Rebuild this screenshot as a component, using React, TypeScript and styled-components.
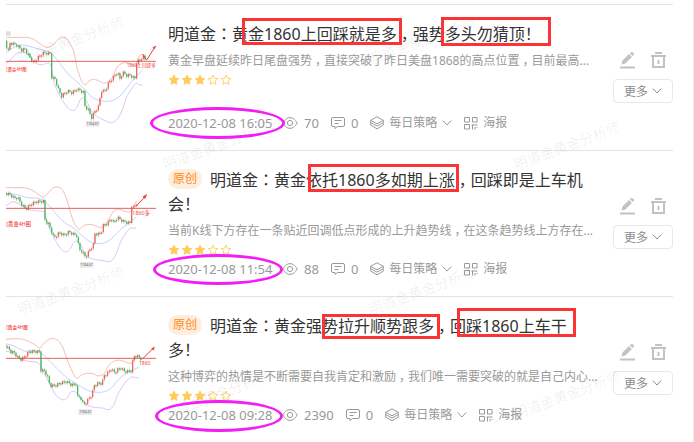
import React from "react";
import styled, { createGlobalStyle } from "styled-components";

const GlobalStyle = createGlobalStyle`
  * { box-sizing: border-box; }
  body {
    margin: 0;
    background: #fff;
    font-family: "Noto Sans", "Noto Sans CJK SC", sans-serif;
  }
`;

const Page = styled.main`
  position: relative;
  padding: 4px 20px 0 6px;
  border-right: 1px solid #ebebeb;
  overflow: hidden;
`;

const Post = styled.article`
  display: grid;
  grid-template-columns: 150px minmax(0, 1fr) 60px;
  min-height: 146px;
  border-top: 1px solid #e4e4e4;
`;

const Thumb = styled.svg`
  display: block;
  width: 150px;
  height: 112px;
  margin-top: 15px;
`;

const Content = styled.div`
  display: flex;
  flex-direction: column;
  padding: 16px 0 17px;
  margin: 0 15px 0 12px;
`;

const Title = styled.h2`
  margin: 0;
  font-size: 16px;
  font-weight: 400;
  line-height: 24px;
  color: #333;
`;

const Colon = styled.span`
  font-family: "Noto Sans CJK JP", sans-serif;
`;

const Comma = styled.span`
  display: inline-block;
  width: 1em;
  text-align: center;
  font-feature-settings: "halt";
`;

const Tag = styled.span`
  display: inline-block;
  margin: 2px 8px 0 0;
  padding: 0 5px;
  border-radius: 10px;
  background: #ffeedd;
  color: #ff8a14;
  font-size: 12px;
  line-height: 20px;
  vertical-align: top;
`;

const Summary = styled.p`
  margin: 5px 0 3px;
  font-size: 12px;
  line-height: 20px;
  color: #999;
  white-space: nowrap;
`;

const Stars = styled.div`
  display: flex;
  gap: 1px;
  height: 12px;
`;

const Meta = styled.div`
  display: flex;
  align-items: center;
  gap: 12px;
  height: 20px;
  margin-top: auto;
  font-size: 13px;
  line-height: 20px;
  color: #999;
  white-space: nowrap;
`;

const MetaItem = styled.span`
  display: flex;
  align-items: center;
  gap: 6px;
`;

const MetaButton = styled.button`
  display: flex;
  align-items: center;
  gap: 5px;
  padding: 0;
  border: 0;
  background: none;
  font: inherit;
  font-size: 12px;
  line-height: 20px;
  color: inherit;
`;

const DateText = styled.time`
  width: 102px;
`;

const Actions = styled.div`
  display: flex;
  flex-direction: column;
  align-items: flex-end;
  gap: 10px;
  padding-top: 46px;
`;

const IconRow = styled.div`
  display: flex;
  gap: 16px;
  padding-right: 7px;
`;

const IconButton = styled.button`
  display: block;
  width: 15px;
  height: 18px;
  padding: 0;
  border: 0;
  background: none;
  color: #c2c2c2;
  svg { display: block; }
`;

const MoreButton = styled.button`
  display: flex;
  align-items: center;
  justify-content: center;
  gap: 4px;
  width: 60px;
  height: 24px;
  padding: 0;
  border: 1px solid #e8e8e8;
  border-radius: 4px;
  background: #fff;
  color: #8c8c8c;
  font: inherit;
  font-size: 12px;
`;

const Overlay = styled.div`
  position: absolute;
  inset: 0;
  pointer-events: none;
`;

type Area = { x: number; y: number; w: number; h: number };

const Frame = styled.div<{ $a: Area }>`
  position: absolute;
  left: ${(p) => p.$a.x}px;
  top: ${(p) => p.$a.y}px;
  width: ${(p) => p.$a.w}px;
  height: ${(p) => p.$a.h}px;
  border: 3px solid #fb3335;
`;

const Ring = styled(Frame)`
  border-color: #f51df5;
  border-radius: 50%;
`;

const Watermark = styled.span<{ $x: number; $y: number }>`
  position: absolute;
  left: ${(p) => p.$x}px;
  top: ${(p) => p.$y}px;
  width: 120px;
  height: 20px;
  font-size: 14px;
  line-height: 20px;
  text-align: center;
  white-space: nowrap;
  color: rgba(0, 0, 0, 0.07);
  transform: rotate(-20deg);
`;

type Pt = [number, number];

type Chart = {
  top: number;
  level: number;
  price: Pt[];
  upper: string;
  middle: string;
  lower: string;
  arrow: string;
  head: string;
  note: { x: number; y: number; size: number; text: string };
  mark: { x: number; y: number; size: number; text: string };
  low: Pt;
  corner?: boolean;
};

const charts: Chart[] = [
  {
    top: 60,
    level: 184,
    price: [[20, 122], [25, 168], [30, 128], [52, 134], [66, 150], [76, 146], [88, 166], [102, 186], [116, 172], [130, 158], [152, 160], [157, 230], [168, 238], [178, 270], [186, 288], [204, 272], [218, 278], [232, 266], [252, 276], [257, 318], [268, 330], [276, 354], [286, 334], [298, 318], [306, 270], [316, 274], [330, 244], [342, 232], [354, 214], [362, 236], [370, 216], [382, 226], [390, 224], [408, 236], [413, 176], [420, 186], [430, 166], [438, 180]],
    upper: "M18 112H74C100 112 108 124 124 134C144 148 150 142 162 132C178 110 190 104 204 120C226 150 224 176 232 208C244 242 248 258 258 254C274 228 292 240 312 250C334 246 342 222 350 202C368 184 384 184 398 196C416 202 406 170 428 162",
    middle: "M18 158C46 136 62 130 92 140C118 150 138 148 154 160C178 184 190 208 210 228C242 252 254 272 282 296C312 308 342 310 366 282C390 250 408 228 428 210",
    lower: "M18 190C34 182 42 160 60 156C88 150 98 192 120 194C140 198 154 166 158 230C164 262 178 286 188 302C206 332 224 346 236 310C246 280 258 294 270 326C290 356 306 356 328 368C362 370 368 318 382 286C398 262 406 250 410 248C416 258 422 252 428 256",
    arrow: "M428 162L440 180L467 138",
    head: "M467 138l-9 5 5 4z",
    note: { x: 19, y: 213, size: 13, text: "[黄金4H图" },
    mark: { x: 380, y: 201, size: 14, text: "1860上回踩多" },
    low: [278, 371],
    corner: true,
  },
  {
    top: 63,
    level: 190,
    price: [[20, 144], [32, 148], [46, 160], [54, 154], [64, 174], [80, 192], [90, 180], [108, 170], [132, 168], [137, 224], [147, 236], [154, 252], [164, 278], [180, 262], [194, 270], [208, 260], [234, 272], [239, 314], [248, 318], [258, 336], [270, 316], [282, 298], [287, 266], [304, 266], [312, 240], [326, 234], [336, 218], [344, 234], [354, 216], [370, 228], [392, 234], [396, 180], [404, 188], [410, 174]],
    upper: "M18 128H72C96 130 110 146 130 158C146 148 152 126 170 126C190 124 198 156 208 188C218 232 228 246 238 254C254 232 276 236 300 248C324 248 326 206 350 192C372 192 382 210 396 196C404 184 406 170 412 166",
    middle: "M18 150C46 144 58 150 80 158C102 160 118 156 136 170C164 198 174 220 202 238C234 254 250 282 278 294C316 302 330 286 350 266C372 240 390 234 408 216",
    lower: "M18 182C28 178 30 170 40 170C62 174 78 196 100 196C132 202 134 188 140 230C154 264 164 282 174 300C194 332 208 324 218 296C234 276 240 296 256 326C274 350 298 342 322 350C346 354 352 310 364 286C378 262 386 252 392 248C400 252 404 248 408 250",
    arrow: "M408 184L438 152",
    head: "M441 148l-13 7 7 6z",
    note: { x: 19, y: 242, size: 16, text: "[黄金4H图" },
    mark: { x: 397, y: 209, size: 16, text: "1860多" },
    low: [260, 359],
  },
  {
    top: 66,
    level: 205,
    price: [[18, 166], [28, 176], [34, 184], [46, 188], [54, 200], [66, 208], [78, 196], [90, 184], [120, 184], [125, 240], [136, 242], [144, 258], [152, 286], [168, 286], [182, 278], [202, 274], [216, 284], [230, 282], [234, 320], [244, 322], [252, 344], [262, 334], [278, 312], [284, 286], [298, 278], [308, 280], [314, 256], [328, 246], [334, 234], [346, 248], [354, 238], [366, 232], [374, 244], [396, 242], [402, 200], [412, 196], [424, 206]],
    upper: "M18 148C42 146 70 142 92 158C112 164 116 178 122 174C136 150 154 142 164 146C188 154 194 190 204 216C220 252 224 262 232 266C248 248 264 248 282 252C302 266 316 252 322 232C338 208 358 206 376 216C392 224 398 220 404 204L412 198",
    middle: "M18 162C46 164 56 180 78 184C108 178 120 184 140 204C168 232 192 260 214 272C240 286 260 306 284 306C314 310 330 302 348 278C370 250 390 244 416 232",
    lower: "M18 184C38 184 50 204 76 212C100 218 116 208 126 236C142 268 152 286 166 314C190 340 202 330 210 308C224 294 236 316 254 336C270 356 290 352 308 354C340 372 344 334 354 312C370 282 382 268 396 260C404 264 410 262 416 264",
    arrow: "M428 206L462 173",
    head: "M464 171l-10 5 6 5z",
    note: { x: 19, y: 117, size: 14, text: "[黄金4H图" },
    mark: { x: 417, y: 226, size: 15, text: "1860" },
    low: [256, 366],
  },
];

function priceAt(points: Pt[], x: number) {
  for (let i = 1; i < points.length; i++) {
    const [x1, y1] = points[i];
    const [x0, y0] = points[i - 1];
    if (x <= x1) return y0 + ((y1 - y0) * (x - x0)) / (x1 - x0);
  }
  return points[points.length - 1][1];
}

function Candles({ points }: { points: Pt[] }) {
  const out: React.ReactNode[] = [];
  const end = points[points.length - 1][0];
  let open = points[0][1];
  for (let x = points[0][0], i = 0; x <= end; x += 5, i++) {
    const close = priceAt(points, x + 2) + (i % 3 === 0 ? 5 : i % 3 === 1 ? -3 : 0);
    const color = close > open ? "#4cb866" : "#e8695f";
    const top = Math.min(open, close);
    const size = Math.max(4, Math.abs(close - open));
    out.push(
      <g key={x} fill={color}>
        <rect x={x - 2} y={top} width={4} height={size} />
        <rect x={x - 1} y={top - 4} width={1.4} height={size + 9} opacity={0.7} />
      </g>
    );
    open = close;
  }
  return <>{out}</>;
}

function ChartThumb({ c }: { c: Chart }) {
  return (
    <Thumb viewBox={`18 ${c.top} 450 336`} role="img" aria-label="黄金4H图">
      <g fill="none" strokeWidth="2.4">
        <path d={c.upper} stroke="#f3aca3" />
        <path d={c.middle} stroke="#aec8ff" />
        <path d={c.lower} stroke="#d4b5fa" />
      </g>
      <Candles points={c.price} />
      <path d={`M18 ${c.level}H468`} stroke="#e0483f" strokeWidth="2.6" />
      <path d={c.arrow} fill="none" stroke="#e8403c" strokeWidth="3" />
      <path d={c.head} fill="#e8403c" stroke="#e8403c" />
      <g fill="#f5453f">
        <text x={c.note.x} y={c.note.y} fontSize={c.note.size} fontWeight="500">{c.note.text}</text>
        <text x={c.mark.x} y={c.mark.y} fontSize={c.mark.size}>{c.mark.text}</text>
      </g>
      {c.corner && <rect x="18" y="94" width="14" height="13" fill="#dedede" />}
      <rect x={c.low[0] - 20} y={c.low[1] - 8} width="40" height="17" fill="#e6e8ea" />
      <text x={c.low[0]} y={c.low[1] + 4} fontSize="10" textAnchor="middle" fill="#666">1764.67</text>
    </Thumb>
  );
}

const Star = ({ full }: { full: boolean }) => (
  <svg width="12" height="12" viewBox="0 0 12 12" aria-hidden="true">
    <path
      d="M6 1.1l1.45 3.1 3.35.4-2.5 2.3.65 3.4L6 8.65 3.05 10.3l.65-3.4L1.2 4.6l3.35-.4z"
      fill={full ? "#ffcb57" : "none"}
      stroke="#ffcb57"
      strokeWidth="0.9"
    />
  </svg>
);

const line = { fill: "none", stroke: "currentColor", strokeWidth: 1, "aria-hidden": true } as const;

const EyeIcon = () => (
  <svg width="16" height="14" viewBox="0 0 16 14" {...line}>
    <path d="M.8 7C3 3.2 5.3 1.700 8 1.700S13 3.200 15.200 7C13 10.800 10.700 12.300 8 12.300S3 10.800.8 7z" />
    <circle cx="8" cy="7" r="2.600" />
  </svg>
);

const CommentIcon = () => (
  <svg width="14" height="14" viewBox="0 0 14 14" {...line}>
    <path d="M2 1.500h10q1.500 0 1.500 1.500v6q0 1.500-1.500 1.500H6.500L4 12.500v-2H2Q.5 10.500.5 9V3Q.5 1.500 2 1.500zM3.500 4.500h7M3.500 7.500h4" />
  </svg>
);

const LayersIcon = () => (
  <svg width="14" height="14" viewBox="0 0 14 14" {...line}>
    <path d="M7 .8l6.300 3.500L7 7.800.7 4.300zM.7 4.300v2.300L7 10.100l6.300-3.500V4.300M.7 6.600v2.500L7 12.800l6.300-3.700V6.600" />
  </svg>
);

const ChevronIcon = () => (
  <svg width="10" height="8" viewBox="0 0 10 8" {...line}>
    <path d="M.8 1.500L5 6l4.200-4.500" />
  </svg>
);

const PosterIcon = () => (
  <svg width="14" height="14" viewBox="0 0 14 14" {...line}>
    <path d="M.5 1.500h5V6h-5zM8.500 1.500h4.500V6H8.500zM.5 8.500h5V13h-5zM7.500 9H13.500M8.500 9v4.500M11 11v2.500M13 11v1" />
  </svg>
);

const EditIcon = () => (
  <svg width="15" height="18" viewBox="0 0 15 18" fill="currentColor" aria-hidden="true">
    <path d="M1.500 13.500l1-4 6.500-6.400 2.900 2.900-6.500 6.500zM9.800 2.300l1.100-1q1-.8 2 .1l.7.7q.9 1 .1 1.900l-1.100 1.100zM0 15.500h15V17.500H0z" />
  </svg>
);

const TrashIcon = () => (
  <svg width="15" height="18" viewBox="0 0 15 18" fill="currentColor" aria-hidden="true">
    <path d="M4 1h7v2H4zM0 4h15v2H0z" />
    <path d="M2 5v11h11V5" fill="none" stroke="currentColor" strokeWidth="2" />
    <path d="M6.500 9h2v4h-2z" />
  </svg>
);

type PostData = {
  original: boolean;
  title: string;
  summary: string;
  date: string;
  views: number;
};

const posts: PostData[] = [
  {
    original: false,
    title: "明道金：黄金1860上回踩就是多，强势多头勿猜顶！",
    summary: "黄金早盘延续昨日尾盘强势，直接突破了昨日美盘1868的高点位置，目前最高...",
    date: "2020-12-08 16:05",
    views: 70,
  },
  {
    original: true,
    title: "明道金：黄金依托1860多如期上涨，回踩即是上车机会！",
    summary: "当前K线下方存在一条贴近回调低点形成的上升趋势线，在这条趋势线上方存在...",
    date: "2020-12-08 11:54",
    views: 88,
  },
  {
    original: true,
    title: "明道金：黄金强势拉升顺势跟多，回踩1860上车干多！",
    summary: "这种博弈的热情是不断需要自我肯定和激励，我们唯一需要突破的就是自己内心...",
    date: "2020-12-08 09:28",
    views: 2390,
  },
];

const frames: Area[] = [
  { x: 242, y: 18, w: 160, h: 27 },
  { x: 441, y: 17, w: 110, h: 29 },
  { x: 308, y: 164, w: 151, h: 28 },
  { x: 322, y: 314, w: 118, h: 25 },
  { x: 457, y: 308, w: 119, h: 29 },
];

const rings: Area[] = [
  { x: 150, y: 107, w: 135, h: 32 },
  { x: 153, y: 254, w: 130, h: 31 },
  { x: 155, y: 400, w: 128, h: 32 },
];

const watermarks: Pt[] = [
  [11, 31], [362, 31], [156, 136], [507, 136],
  [11, 281], [362, 281], [156, 385], [507, 385],
];

// Full-width colons and commas sit in the middle of their cell.
function Punctuated({ text }: { text: string }) {
  return (
    <>
      {text.split(/([：，])/).map((part, i) => {
        if (part === "：") return <Colon key={i}>{part}</Colon>;
        if (part === "，") return <Comma key={i}>{part}</Comma>;
        return part;
      })}
    </>
  );
}

function PostRow({ post, chart }: { post: PostData; chart: Chart }) {
  return (
    <Post>
      <ChartThumb c={chart} />
      <Content>
        <Title>
          {post.original && <Tag>原创</Tag>}
          <Punctuated text={post.title} />
        </Title>
        <Summary><Punctuated text={post.summary} /></Summary>
        <Stars role="img" aria-label="3/5">
          {[0, 1, 2, 3, 4].map((i) => <Star key={i} full={i < 3} />)}
        </Stars>
        <Meta>
          <DateText>{post.date}</DateText>
          <MetaItem><EyeIcon />{post.views}</MetaItem>
          <MetaItem><CommentIcon />0</MetaItem>
          <MetaButton type="button"><LayersIcon />每日策略<ChevronIcon /></MetaButton>
          <MetaButton type="button"><PosterIcon />海报</MetaButton>
        </Meta>
      </Content>
      <Actions>
        <IconRow>
          <IconButton type="button" aria-label="编辑"><EditIcon /></IconButton>
          <IconButton type="button" aria-label="删除"><TrashIcon /></IconButton>
        </IconRow>
        <MoreButton type="button">更多<ChevronIcon /></MoreButton>
      </Actions>
    </Post>
  );
}

export default function App() {
  return (
    <>
      <GlobalStyle />
      <Page>
        {posts.map((post, i) => <PostRow key={post.date} post={post} chart={charts[i]} />)}
        <Overlay>
          {watermarks.map(([x, y]) => (
            <Watermark key={`${x}-${y}`} $x={x} $y={y} aria-hidden="true">明道金黄金分析师</Watermark>
          ))}
          {frames.map((a) => <Frame key={`${a.x}-${a.y}`} $a={a} />)}
          {rings.map((a) => <Ring key={`${a.x}-${a.y}`} $a={a} />)}
        </Overlay>
      </Page>
    </>
  );
}
